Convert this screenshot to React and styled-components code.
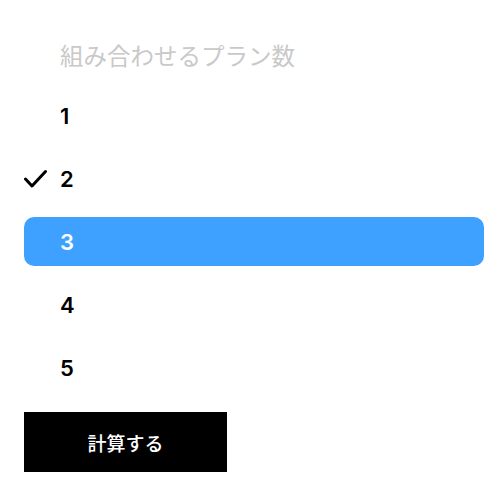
import React from 'react';
import styled, { createGlobalStyle } from 'styled-components';

const GlobalStyle = createGlobalStyle`
  html, body {
    margin: 0;
    padding: 0;
    background: #fff;
  }
  body {
    font-family: Inter, "Noto Sans CJK JP", sans-serif;
  }
`;

const Page = styled.div`
  width: 460px;
  padding: 30px 0 0 24px;
  display: flex;
  flex-direction: column;
`;

const Title = styled.div`
  height: 49px;
  display: flex;
  align-items: center;
  padding-left: 36px;
  margin-bottom: 12px;
  font-family: "Noto Sans CJK JP", sans-serif;
  font-size: 23.5px;
  color: #c9c9c9;
`;

const List = styled.ul`
  list-style: none;
  margin: 0;
  padding: 0;
  display: flex;
  flex-direction: column;
  gap: 14px;
`;

const Row = styled.li`
  position: relative;
  height: 49px;
  display: flex;
  align-items: center;
  padding-left: 36px;
  border-radius: 10px;
  font-family: Inter, sans-serif;
  font-size: 22px;
  font-weight: 600;
  color: ${(p) => (p.$active ? '#fff' : '#000')};
  background: ${(p) => (p.$active ? '#3ea1ff' : 'transparent')};
`;

const Check = styled.svg`
  position: absolute;
  left: 0;
  top: 50%;
  transform: translateY(-50%);
  width: 23px;
  height: 19px;
`;

const Button = styled.button`
  margin-top: 20px;
  width: 203px;
  height: 60px;
  border: none;
  border-radius: 0;
  background: #000;
  color: #fff;
  font-family: "Noto Sans CJK JP", sans-serif;
  font-size: 19px;
  font-weight: 500;
  cursor: pointer;
`;

const options = [1, 2, 3, 4, 5];

export default function App() {
  const selected = 2;
  const highlighted = 3;
  return (
    <>
      <GlobalStyle />
      <Page>
        <Title>組み合わせるプラン数</Title>
        <List>
          {options.map((n) => (
            <Row key={n} $active={n === highlighted}>
              {n === selected && (
                <Check viewBox="0 0 23 19" fill="none">
                  <path
                    d="M1.5 9.5 L8 16.5 L21.5 2"
                    stroke="#000"
                    strokeWidth="3"
                    strokeLinecap="round"
                    strokeLinejoin="round"
                  />
                </Check>
              )}
              {n}
            </Row>
          ))}
        </List>
        <Button>計算する</Button>
      </Page>
    </>
  );
}
